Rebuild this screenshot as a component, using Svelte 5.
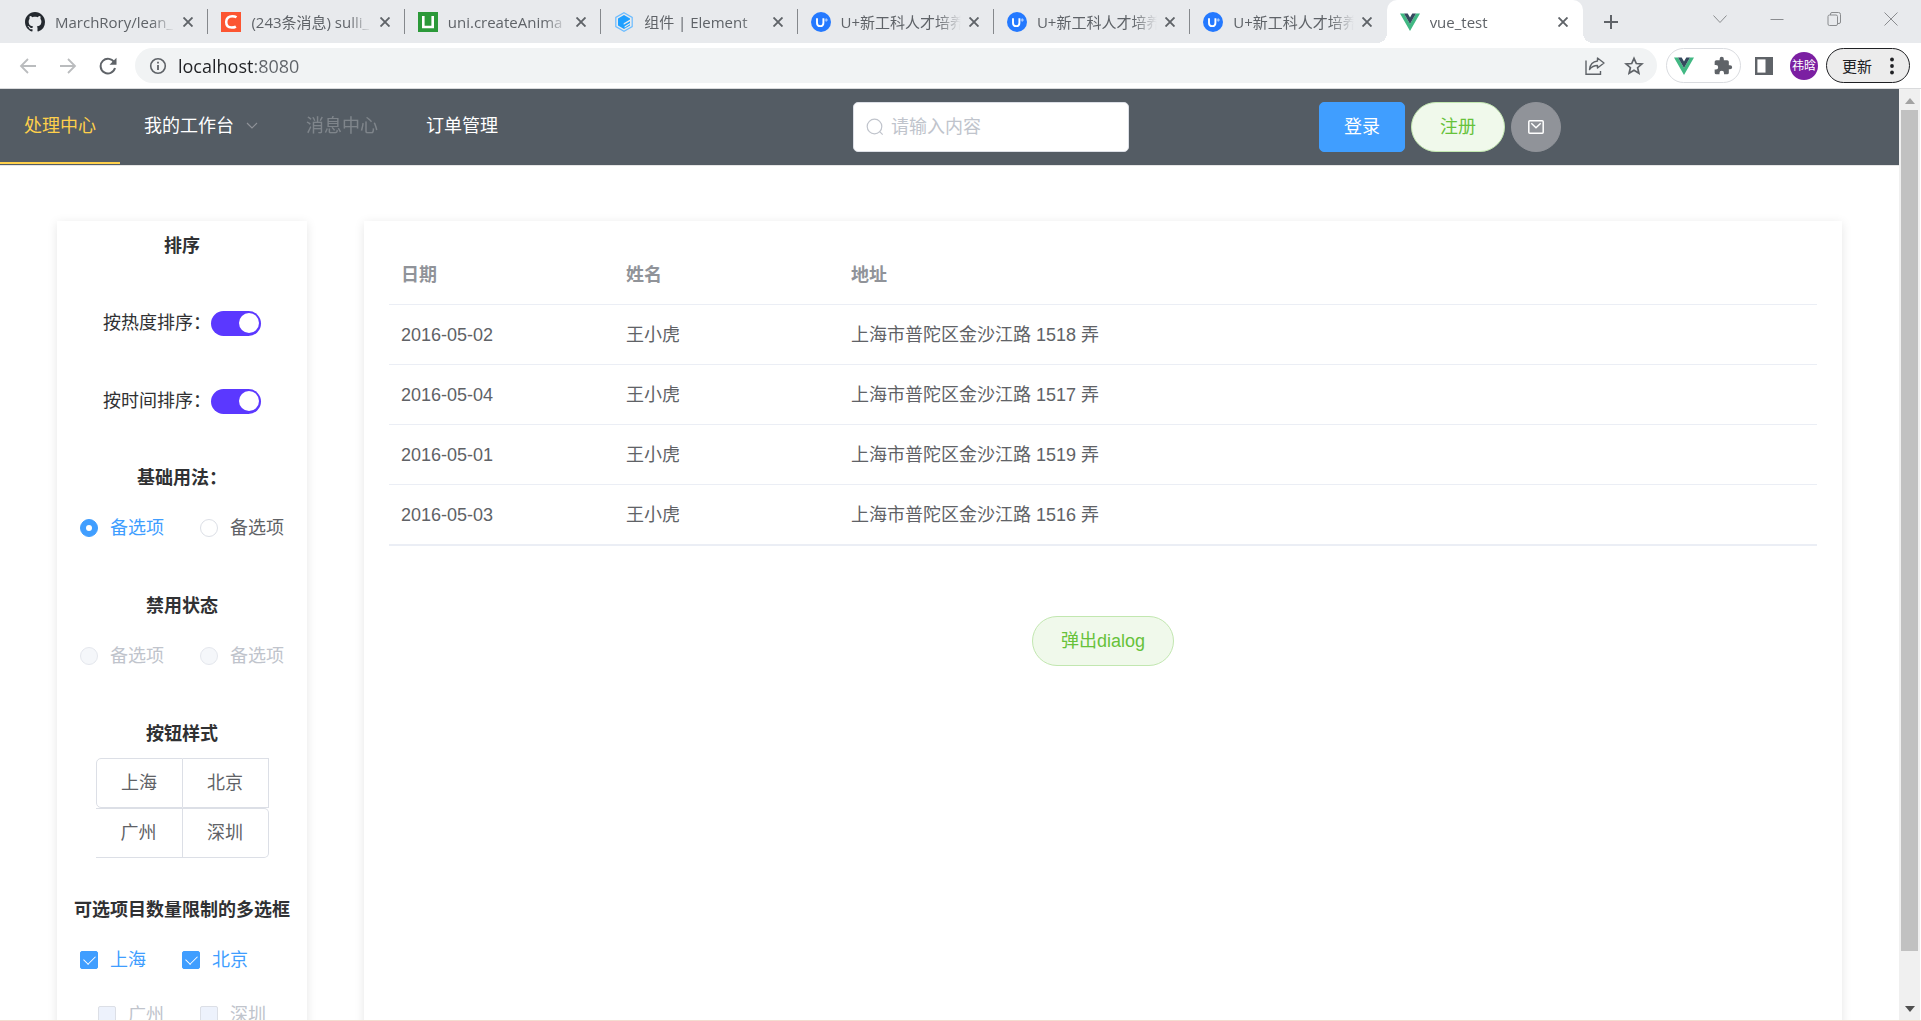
<script>
  const tabs = [
    { icon: 'github', title: 'MarchRory/lean_' },
    { icon: 'csdn', title: '(243条消息) sulli_' },
    { icon: 'uni', title: 'uni.createAnima' },
    { icon: 'element', title: '组件 | Element' },
    { icon: 'u', title: 'U+新工科人才培养' },
    { icon: 'u', title: 'U+新工科人才培养' },
    { icon: 'u', title: 'U+新工科人才培养' },
    { icon: 'vue', title: 'vue_test', active: true }
  ];

  const rows = [
    { date: '2016-05-02', name: '王小虎', address: '上海市普陀区金沙江路 1518 弄' },
    { date: '2016-05-04', name: '王小虎', address: '上海市普陀区金沙江路 1517 弄' },
    { date: '2016-05-01', name: '王小虎', address: '上海市普陀区金沙江路 1519 弄' },
    { date: '2016-05-03', name: '王小虎', address: '上海市普陀区金沙江路 1516 弄' }
  ];

  const cities = ['上海', '北京', '广州', '深圳'];

  let url = $state('localhost:8080');
  let query = $state('');
  let byHeat = $state(true);
  let byTime = $state(true);
  let basic = $state('1');
  let city = $state('');
  let picked = $state(['上海', '北京']);
</script>

{#snippet vueLogo()}
  <svg class="icon20" viewBox="0 0 20 20" aria-hidden="true">
    <path d="M0 1.5h4L10 12l6-10.5h4L10 19z" fill="#41b883" />
    <path d="M4 1.5h3.7L10 5.6l2.3-4.1H16L10 12z" fill="#35495e" />
  </svg>
{/snippet}

{#snippet cross()}
  <svg class="icon10" viewBox="0 0 10 10" aria-hidden="true">
    <path d="M.5.5l9 9M9.5.5l-9 9" stroke="#5f6368" stroke-width="1.900" fill="none" />
  </svg>
{/snippet}

{#snippet favicon(kind)}
  {#if kind === 'github'}
    <svg class="icon20" viewBox="0 0 16 16" aria-hidden="true">
      <path fill="#24292f" d="M8 0C3.58 0 0 3.58 0 8c0 3.54 2.29 6.53 5.47 7.59.4.07.55-.17.55-.38 0-.19-.01-.82-.01-1.49-2.01.37-2.53-.49-2.69-.94-.09-.23-.48-.94-.82-1.13-.28-.15-.68-.52-.01-.53.63-.01 1.08.58 1.23.82.72 1.21 1.87.87 2.33.66.07-.52.28-.87.51-1.07-1.78-.2-3.64-.89-3.64-3.95 0-.87.31-1.59.82-2.15-.08-.2-.36-1.02.08-2.12 0 0 .67-.21 2.2.82.64-.18 1.32-.27 2-.27s1.36.09 2 .27c1.53-1.04 2.2-.82 2.2-.82.44 1.1.16 1.92.08 2.12.51.56.82 1.27.82 2.15 0 3.07-1.87 3.75-3.65 3.95.29.25.54.73.54 1.48 0 1.07-.01 1.93-.01 2.2 0 .21.15.46.55.38A8.01 8.01 0 0 0 16 8c0-4.42-3.58-8-8-8z" />
    </svg>
  {:else if kind === 'csdn'}
    <svg class="icon20" viewBox="0 0 20 20" aria-hidden="true">
      <rect width="20" height="20" fill="#fc5531" />
      <path d="M15.5 5.3c-1.2-.8-2.6-1.1-4.2-1.1-3.7 0-6.1 2.2-6.1 5.9 0 3.4 2 5.500 5.400 5.500 1.700 0 3.100-.3 4.300-1" fill="none" stroke="#fff" stroke-width="2.500" />
    </svg>
  {:else if kind === 'uni'}
    <svg class="icon20" viewBox="0 0 20 20" aria-hidden="true">
      <rect width="20" height="20" fill="#2b9939" />
      <path d="M5.300 4v11h9.400V4" fill="none" stroke="#fff" stroke-width="2.600" />
      <path d="M4 15h12" stroke="#fff" stroke-width="2" />
    </svg>
  {:else if kind === 'element'}
    <svg class="icon20" viewBox="0 0 20 20" aria-hidden="true">
      <path d="M10 .7l8.200 4.700v9.200L10 19.300 1.800 14.600V5.400z" fill="none" stroke="#6bbcff" stroke-width="1.200" />
      <path d="M10 3l6 3.400v1.200l-6.300 3.600v1.600l6.300-3.600v1.800l-5.400 3.200v1.500L16 12.300v1.300L10 17l-6-3.400V6.400z" fill="#1e9fff" />
    </svg>
  {:else if kind === 'u'}
    <svg class="icon20" viewBox="0 0 20 20" aria-hidden="true">
      <circle cx="10" cy="10" r="10" fill="#2479ff" />
      <path d="M6 6.300v4.600c0 2 1.200 3.200 3.200 3.200s3.200-1.200 3.200-3.200V6.300" fill="none" stroke="#fff" stroke-width="1.900" />
      <path d="M15.200 6.300v3.400M13.500 8h3.400" stroke="#b9d6ff" stroke-width="1" />
    </svg>
  {:else}
    {@render vueLogo()}
  {/if}
{/snippet}

<div class="browser">
  <header>
    <div class="strip">
      <div class="tabs">
        {#each tabs as tab}
          <div class="tab" class:active={tab.active}>
            {@render favicon(tab.icon)}
            <span class="tab-title">{tab.title}</span>
            <button class="plain close" aria-label="关闭标签页">{@render cross()}</button>
          </div>
        {/each}
      </div>
      <button class="plain new-tab" aria-label="新标签页">
        <svg width="14" height="14" viewBox="0 0 14 14"><path d="M7 0v14M0 7h14" stroke="#5f6368" stroke-width="2" /></svg>
      </button>
      <div class="window-controls">
        <button class="plain" aria-label="搜索标签页"><svg width="14" height="14" viewBox="0 0 14 14"><path d="M.5 3.500L7 10.500l6.500-7" /></svg></button>
        <button class="plain" aria-label="最小化"><svg width="14" height="14" viewBox="0 0 14 14"><path d="M.5 7.500h13" /></svg></button>
        <button class="plain" aria-label="还原"><svg width="14" height="14" viewBox="0 0 14 14"><rect x="1" y="3" width="9.500" height="10.500" rx="1.500" /><path d="M3.500 3V2q0-1.500 1.500-1.500h6.500q2 0 2 2V10q0 1.500-1.500 1.500h-1.500" /></svg></button>
        <button class="plain" aria-label="关闭"><svg width="14" height="14" viewBox="0 0 14 14"><path d="M.5.5l13 13M13.500.5l-13 13" /></svg></button>
      </div>
    </div>

    <div class="toolbar">
      <div class="history">
        <button class="plain" aria-label="后退"><svg width="18" height="18" viewBox="0 0 18 18"><path d="M17 9H2M9 2L2 9l7 7" fill="none" stroke="#babcbe" stroke-width="1.800" /></svg></button>
        <button class="plain" aria-label="前进"><svg width="18" height="18" viewBox="0 0 18 18"><path d="M1 9h15M9 2l7 7-7 7" fill="none" stroke="#babcbe" stroke-width="1.800" /></svg></button>
        <button class="plain" aria-label="重新加载"><svg width="18" height="18" viewBox="0 0 18 18"><path d="M15.300 5.500A7.300 7.300 0 1 0 16 11" fill="none" stroke="#5f6368" stroke-width="2" /><path d="M17.500.8v7h-7z" fill="#5f6368" /></svg></button>
      </div>
      <div class="omnibox">
        <svg width="18" height="18" viewBox="0 0 18 18" aria-hidden="true"><circle cx="9" cy="9" r="7.300" fill="none" stroke="#5f6368" stroke-width="1.600" /><path d="M9 8v5M9 4.800v1.800" stroke="#5f6368" stroke-width="1.800" /></svg>
        <input class="url" type="text" aria-label="地址" bind:value={url} />
        <button class="plain" aria-label="分享"><svg width="20" height="18" viewBox="0 0 20 18"><path d="M1 3.500v13.800h14.500V14" fill="none" stroke="#5f6368" stroke-width="1.400" /><path d="M12.500 1l6.500 5-6.500 5V8.500C9 8.500 6.500 9.800 4.500 12.500 5 8 8 4.500 12.500 4z" fill="none" stroke="#5f6368" stroke-width="1.400" stroke-linejoin="round" /></svg></button>
        <button class="plain" aria-label="加入书签"><svg width="20" height="20" viewBox="0 0 20 20"><path d="M10 2.300l2.300 5.200 5.600.5-4.300 3.700 1.300 5.600L10 14.300l-4.900 3 1.300-5.600L2.100 8l5.600-.5z" fill="none" stroke="#5f6368" stroke-width="1.700" /></svg></button>
      </div>
      <div class="extensions">
        <button class="plain" aria-label="Vue Devtools">{@render vueLogo()}</button>
        <button class="plain" aria-label="扩展程序"><svg width="20" height="20" viewBox="0 0 24 24"><path fill="#5f6368" d="M20.500 11H19V7a2 2 0 0 0-2-2h-4V3.500a2.500 2.500 0 0 0-5 0V5H4a2 2 0 0 0-2 2v3.800h1.500a2.700 2.700 0 0 1 0 5.400H2V20a2 2 0 0 0 2 2h3.800v-1.500a2.700 2.700 0 0 1 5.400 0V22H17a2 2 0 0 0 2-2v-4h1.500a2.500 2.500 0 0 0 0-5z" /></svg></button>
      </div>
      <button class="plain" aria-label="侧边栏"><svg width="18" height="18" viewBox="0 0 18 18"><rect x="1.200" y="1.200" width="15.600" height="15.600" fill="none" stroke="#5f6368" stroke-width="2.400" /><path d="M10.500 1h6.500v16h-6.500z" fill="#5f6368" /></svg></button>
      <button class="plain avatar">祎晗</button>
      <button class="update">
        更新
        <svg width="4" height="18" viewBox="0 0 4 18" aria-hidden="true"><g fill="#202124"><circle cx="2" cy="2.500" r="1.900" /><circle cx="2" cy="9" r="1.900" /><circle cx="2" cy="15.500" r="1.900" /></g></svg>
      </button>
    </div>
  </header>

  <div class="viewport">
    <div class="page">
      <div class="navbar">
        <nav>
          <a class="current" href="#center">处理中心</a>
          <a href="#workspace">我的工作台 <svg width="12" height="8" viewBox="0 0 12 8" aria-hidden="true"><path d="M1 1l5 5 5-5" fill="none" stroke="#909399" stroke-width="1.100" /></svg></a>
          <a class="off" href="#messages" aria-disabled="true">消息中心</a>
          <a href="#orders">订单管理</a>
        </nav>
        <div>
          <label class="search">
            <svg width="18" height="18" viewBox="0 0 18 18" aria-hidden="true"><circle cx="8.500" cy="8.500" r="7.300" fill="none" stroke="#c0c4cc" stroke-width="1.200" /><path d="M13.700 13.700l3 3" stroke="#c0c4cc" stroke-width="1.200" /></svg>
            <input type="text" placeholder="请输入内容" aria-label="搜索" bind:value={query} />
          </label>
        </div>
        <div class="actions">
          <button class="btn primary">登录</button>
          <button class="btn success">注册</button>
          <button class="btn mail" aria-label="消息"><svg width="16" height="14" viewBox="0 0 16 14"><rect x=".8" y=".8" width="14.400" height="12.400" rx="1" fill="none" stroke="#fff" stroke-width="1.500" /><path d="M3.300 3.300L8 7.700l4.700-4.400" fill="none" stroke="#fff" stroke-width="1.500" /></svg></button>
        </div>
      </div>

      <div class="content">
        <aside class="card">
          <h4>排序</h4>
          <label class="switch-row">按热度排序：<input class="switch" type="checkbox" bind:checked={byHeat} /></label>
          <label class="switch-row">按时间排序：<input class="switch" type="checkbox" bind:checked={byTime} /></label>

          <h4>基础用法：</h4>
          <div class="options">
            <label class:on={basic === '1'}><input type="radio" name="basic" value="1" bind:group={basic} />备选项</label>
            <label class:on={basic === '2'}><input type="radio" name="basic" value="2" bind:group={basic} />备选项</label>
          </div>

          <h4>禁用状态</h4>
          <div class="options">
            <label class="disabled"><input type="radio" name="locked" disabled />备选项</label>
            <label class="disabled"><input type="radio" name="locked" disabled />备选项</label>
          </div>

          <h4>按钮样式</h4>
          <div class="radio-buttons">
            {#each cities as c}
              <label><input type="radio" name="city" value={c} bind:group={city} />{c}</label>
            {/each}
          </div>

          <h4>可选项目数量限制的多选框</h4>
          <div class="options leading">
            {#each cities.slice(0, 2) as c}
              <label class:on={picked.includes(c)}><input type="checkbox" value={c} bind:group={picked} />{c}</label>
            {/each}
          </div>
          <div class="options">
            {#each cities.slice(2) as c}
              <label class="disabled"><input type="checkbox" value={c} bind:group={picked} disabled />{c}</label>
            {/each}
          </div>
        </aside>

        <main class="card">
          <table>
            <thead>
              <tr><th class="narrow">日期</th><th class="narrow">姓名</th><th>地址</th></tr>
            </thead>
            <tbody>
              {#each rows as row}
                <tr><td>{row.date}</td><td>{row.name}</td><td>{row.address}</td></tr>
              {/each}
            </tbody>
          </table>
          <button class="btn success dialog">弹出dialog</button>
        </main>
      </div>
    </div>

    <div class="scrollbar" aria-hidden="true">
      <svg width="10" height="6" viewBox="0 0 10 6"><path d="M0 6l5-6 5 6z" fill="#a3a3a3" /></svg>
      <div class="thumb"></div>
      <svg width="10" height="6" viewBox="0 0 10 6"><path d="M0 0l5 6 5-6z" fill="#505050" /></svg>
    </div>
  </div>
</div>

<style>
  :global(body) {
    margin: 0;
    background: #fff;
  }

  .browser {
    --sans: 'Liberation Sans', 'Noto Sans CJK SC', sans-serif;
    --ui: 'Open Sans', 'Noto Sans CJK SC', sans-serif;
    box-sizing: border-box;
    height: 100vh;
    display: flex;
    flex-direction: column;
    overflow: hidden;
    border-bottom: 1px solid #f3ddd0;
    font: 18px/24px var(--sans);
    color: #303133;
  }

  .browser :global(*) {
    box-sizing: border-box;
  }

  svg {
    display: block;
    flex: none;
  }

  button,
  input {
    font: inherit;
    color: inherit;
    margin: 0;
  }

  .plain {
    display: flex;
    align-items: center;
    justify-content: center;
    flex: none;
    padding: 0;
    border: 0;
    background: none;
  }

  .icon20 {
    width: 20px;
    height: 20px;
  }

  .icon10 {
    width: 10px;
    height: 10px;
  }

  header {
    flex: none;
    font-family: var(--ui);
    border-bottom: 1px solid #d9dadc;
  }

  /* tab strip */
  .strip {
    display: flex;
    height: 43px;
    padding-left: 12px;
    background: #e8eaed;
  }

  .tabs {
    display: flex;
    flex: 1;
    min-width: 0;
  }

  .tab {
    position: relative;
    display: flex;
    align-items: center;
    flex: 1 1 0;
    min-width: 0;
    padding: 0 15px 0 13px;
    font-size: 15px;
    color: #5f6368;
  }

  .tab:not(.active)::after {
    content: '';
    position: absolute;
    right: 0;
    top: 9px;
    width: 1px;
    height: 25px;
    background: #85888c;
  }

  .tab:nth-last-child(2)::after {
    display: none;
  }

  .tab.active {
    background: #fff;
    border-radius: 10px 10px 0 0;
  }

  .tab.active::before,
  .tab.active::after {
    content: '';
    position: absolute;
    bottom: 0;
    width: 10px;
    height: 10px;
  }

  .tab.active::before {
    right: 100%;
    background: radial-gradient(circle at 0 0, transparent 10px, #fff 10px);
  }

  .tab.active::after {
    left: 100%;
    background: radial-gradient(circle at 100% 0, transparent 10px, #fff 10px);
  }

  .tab-title {
    flex: 1;
    min-width: 0;
    margin: 0 8px 0 10px;
    overflow: hidden;
    white-space: nowrap;
    mask-image: linear-gradient(90deg, #000 calc(100% - 24px), transparent);
  }

  .new-tab {
    width: 55px;
  }

  .window-controls {
    display: flex;
    padding: 0 2px 6px 53px;
  }

  .window-controls button {
    width: 57px;
  }

  .window-controls path,
  .window-controls rect {
    fill: none;
    stroke: #8a8c8f;
  }

  /* toolbar */
  .toolbar {
    display: flex;
    align-items: center;
    height: 45px;
    padding-right: 11px;
  }

  .history {
    display: flex;
    padding: 0 7px 0 8px;
  }

  .history button {
    width: 40px;
    height: 35px;
  }

  .omnibox {
    display: flex;
    align-items: center;
    flex: 1;
    height: 35px;
    padding: 0 13px 0 14px;
    border-radius: 18px;
    background: #f1f3f4;
  }

  .omnibox .plain + .plain {
    margin-left: 19px;
  }

  .url {
    flex: 1;
    min-width: 0;
    height: 35px;
    margin-left: 11px;
    padding: 0;
    border: 0;
    outline: 0;
    font-size: 18px;
    color: transparent;
    background: linear-gradient(90deg, #202124 76px, #5f6368 76px);
    background-clip: text;
    -webkit-background-clip: text;
  }

  .extensions {
    display: flex;
    justify-content: space-between;
    align-items: center;
    width: 75px;
    height: 35px;
    margin: 0 14px 0 9px;
    padding: 0 7px;
    border: 1px solid #dadce0;
    border-radius: 18px;
  }

  .avatar {
    width: 28px;
    height: 28px;
    margin: 0 8px 0 17px;
    border-radius: 50%;
    background: #7b1fa2;
    color: #fff;
    font-size: 12px;
  }

  .update {
    display: flex;
    align-items: center;
    justify-content: space-between;
    width: 84px;
    height: 35px;
    padding: 0 15px;
    border: 1px solid #202124;
    border-radius: 18px;
    background: #ececec;
    font-size: 15px;
    color: #202124;
  }

  /* page */
  .viewport {
    display: flex;
    flex: 1;
    min-height: 0;
    padding-right: 1px;
  }

  .page {
    flex: 1;
    min-width: 0;
    overflow: hidden;
  }

  .scrollbar {
    display: flex;
    flex-direction: column;
    align-items: center;
    width: 21px;
    padding: 9px 0 8px;
    background: #f0f0f0;
  }

  .thumb {
    width: 17px;
    height: 92%;
    margin: 6px 0 auto;
    background: #c1c1c1;
  }

  .navbar {
    display: grid;
    grid-template-columns: 853fr 466fr 580fr;
    align-items: center;
    height: 77px;
    background: #545c64;
    border-bottom: 1px solid #e6e6e6;
  }

  nav {
    display: flex;
    align-self: start;
  }

  nav a {
    display: flex;
    align-items: center;
    gap: 12px;
    height: 75px;
    padding: 0 24px;
    border-bottom: 2px solid transparent;
    color: #fff;
    text-decoration: none;
    white-space: nowrap;
  }

  nav .current {
    color: #ffd04b;
    border-color: #ffd04b;
  }

  nav .off {
    opacity: 0.25;
  }

  .search {
    display: flex;
    align-items: center;
    gap: 7px;
    width: 276px;
    height: 50px;
    padding: 0 12px;
    border: 1px solid #dcdfe6;
    border-radius: 5px;
    background: #fff;
  }

  .search input {
    flex: 1;
    min-width: 0;
    padding: 0;
    border: 0;
    outline: 0;
    background: none;
    color: #606266;
  }

  .search input::placeholder {
    color: #c0c4cc;
    opacity: 1;
  }

  .actions {
    display: flex;
    gap: 6px;
  }

  .btn {
    height: 50px;
    padding: 0 24px;
    border: 1px solid #409eff;
    border-radius: 5px;
    background: #409eff;
    color: #fff;
  }

  .btn.success {
    padding: 0 28px;
    border-color: #c2e7b0;
    border-radius: 25px;
    background: #f0f9eb;
    color: #67c23a;
  }

  .btn.mail {
    display: flex;
    align-items: center;
    justify-content: center;
    width: 50px;
    padding: 0;
    border-color: #909399;
    border-radius: 50%;
    background: #909399;
  }

  .content {
    display: flex;
    gap: 57px;
    min-height: 1000px;
    padding: 55px 57px;
  }

  .card {
    background: #fff;
    box-shadow: 0 2px 10px rgba(0, 0, 0, 0.1);
  }

  aside {
    flex: none;
    width: 250px;
    padding-top: 13px;
  }

  h4 {
    margin: 0;
    font-size: 18px;
    text-align: center;
    white-space: nowrap;
  }

  .switch-row {
    display: flex;
    align-items: center;
    justify-content: center;
    height: 26px;
    margin: 52px 0;
  }

  .switch {
    display: flex;
    align-items: center;
    justify-content: flex-end;
    width: 50px;
    height: 25px;
    padding: 0 2px;
    appearance: none;
    border-radius: 13px;
    background: #5b38ff;
  }

  .switch::before {
    content: '';
    width: 20px;
    height: 20px;
    border-radius: 50%;
    background: #fff;
  }

  .switch:not(:checked) {
    justify-content: flex-start;
    background: #dcdfe6;
  }

  .options {
    display: flex;
    justify-content: center;
    gap: 36px;
    margin: 26px 0 54px;
    color: #606266;
  }

  .options.leading {
    margin-bottom: 31px;
    padding-right: 36px;
  }

  .options label {
    display: flex;
    align-items: center;
    gap: 12px;
  }

  .options .on {
    color: #409eff;
  }

  .options .disabled {
    color: #c0c4cc;
  }

  .options input {
    display: grid;
    place-items: center;
    flex: none;
    width: 18px;
    height: 18px;
    appearance: none;
    border: 1px solid #dcdfe6;
    background: #fff;
  }

  .options input[type='radio'] {
    border-radius: 50%;
  }

  .options input[type='checkbox'] {
    border-radius: 2px;
  }

  .options input:checked {
    border-color: #409eff;
    background: #409eff;
  }

  .options input:disabled {
    border-color: #e4e7ed;
    background: #f5f7fa;
  }

  .options input[type='checkbox']:disabled {
    border-color: #dcdfe6;
    background: #edf2fc;
  }

  .options input[type='radio']:checked::before {
    content: '';
    width: 6px;
    height: 6px;
    border-radius: 50%;
    background: #fff;
  }

  .options input[type='checkbox']:checked::before {
    content: '';
    width: 10px;
    height: 6px;
    margin-bottom: 3px;
    border: solid #fff;
    border-width: 0 0 1px 1px;
    transform: rotate(-45deg);
  }

  .radio-buttons {
    display: grid;
    grid-template-columns: 87px 86px;
    justify-content: center;
    margin: 12px 0 40px;
    color: #606266;
  }

  .radio-buttons label {
    position: relative;
    display: flex;
    align-items: center;
    justify-content: center;
    height: 50px;
    border: 1px solid #dcdfe6;
    border-left: 0;
  }

  .radio-buttons label:first-child {
    border-left: 1px solid #dcdfe6;
    border-radius: 5px 0 0 5px;
  }

  .radio-buttons label:last-child {
    border-radius: 0 5px 5px 0;
  }

  .radio-buttons input {
    position: absolute;
    inset: 0;
    opacity: 0;
  }

  main {
    flex: 1;
    min-width: 0;
    padding: 25px;
    text-align: center;
  }

  table {
    width: 100%;
    border-collapse: separate;
    border-spacing: 0;
    table-layout: fixed;
    text-align: left;
    color: #606266;
    border-bottom: 1px solid #ebeef5;
  }

  th,
  td {
    height: 60px;
    padding: 0 12px;
    border-bottom: 1px solid #ebeef5;
  }

  th {
    height: 59px;
    color: #909399;
  }

  .narrow {
    width: 225px;
  }

  .dialog {
    margin-top: 70px;
  }
</style>
